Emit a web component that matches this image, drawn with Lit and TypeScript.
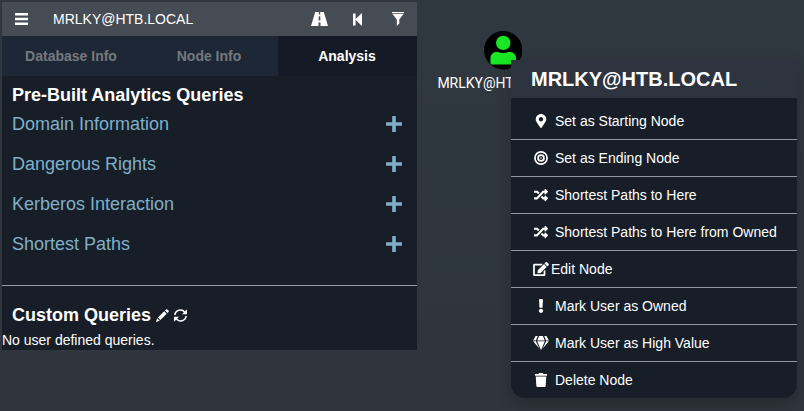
import { LitElement, html, css, svg } from "lit";
import { customElement } from "lit/decorators.js";

const icon = (name: string, viewBox: string, body: unknown) =>
  html`<svg class="icon ${name}" viewBox=${viewBox} fill="currentColor">${body}</svg>`;

const shuffle = () => icon("fa", "0 0 512 512", svg`<path d="M504.971 359.029c9.373 9.373 9.373 24.569 0 33.941l-80 79.984c-15.01 15.01-40.971 4.49-40.971-16.971V416h-58.785a12.004 12.004 0 0 1-8.773-3.812l-70.556-75.596 53.333-57.143L352 336h32v-39.981c0-21.438 25.943-31.998 40.971-16.971l80 79.981zM12 176h84l52.781 56.551 53.333-57.143-70.556-75.596A11.999 11.999 0 0 0 122.785 96H12c-6.627 0-12 5.373-12 12v56c0 6.627 5.373 12 12 12zm372 0v39.984c0 21.46 25.961 31.98 40.971 16.971l80-79.984c9.373-9.373 9.373-24.569 0-33.941l-80-79.981C409.943 24.021 384 34.582 384 56.019V96h-58.785a12.004 12.004 0 0 0-8.773 3.812L96 336H12c-6.627 0-12 5.373-12 12v56c0 6.627 5.373 12 12 12h110.785c3.326 0 6.503-1.381 8.773-3.812L352 176h32z"/>`);

const icons = {
  bars: () => icon("bars", "0 0 13 12", svg`<path d="M0 0h13v2.4H0zM0 4.800h13v2.400H0zM0 9.600h13v2.400H0z"/>`),
  road: () => icon("road", "0 0 17 14", svg`<path d="M4.2 0H7.800v2.6h1.400V0h3.600L17 14H9.500v-3.400H7.500V14H0zM7.800 4.2 7.600 8.600h1.800L9.200 4.200z" fill-rule="evenodd"/>`),
  back: () => icon("back", "0 0 9 13", svg`<path d="M0 .5h2.6v5.4L9 0v13L2.6 7.1v5.4H0z"/>`),
  filter: () => icon("filter", "0 0 12 14", svg`<path d="M0 0h12v1.2H0zM.5 2h11L7.3 7.5v4L4.8 14V7.5z"/>`),
  plus: () => icon("plus", "0 0 16 16", svg`<path d="M6.2.5q0-.5.5-.5h2.600q.5 0 .5.5v5.800h5.700q.5 0 .5.5v2.400q0 .5-.5.5H9.800v5.800q0 .5-.5.5H6.700q-.5 0-.5-.5v-5.800H.5Q0 9.700 0 9.200V6.800q0-.5.5-.5h5.700z"/>`),
  pencil: () => icon("pencil", "0 0 13 13", svg`<path d="m0 13 1.200-3.700 2.500 2.500zM1.900 8.600l6.300-6.300 2.500 2.500-6.300 6.300zM9 1.500l1-1q.7-.7 1.400 0l1.100 1.100q.7.7 0 1.400l-1 1z"/>`),
  refresh: () => icon("refresh", "0 0 13 13", svg`<g fill="none" stroke="currentColor" stroke-width="1.600"><path d="M.9 6A5.500 5.500 0 0 1 10.700 3.200M12.100 7A5.500 5.500 0 0 1 2.300 9.800"/></g><path d="M13 .2v5H8zM0 12.800v-5h5z"/>`),
};

const menu = [
  ["Set as Starting Node", () => icon("fa", "-64 0 512 512", svg`<path d="M172.268 501.670C26.970 291.031 0 269.413 0 192 0 85.961 85.961 0 192 0s192 85.961 192 192c0 77.413-26.970 99.031-172.268 309.670-9.535 13.774-29.930 13.773-39.464 0zM192 272c44.183 0 80-35.817 80-80s-35.817-80-80-80-80 35.817-80 80 35.817 80 80 80z"/>`)],
  ["Set as Ending Node", () => icon("fa", "0 0 512 512", svg`<g fill="none" stroke="currentColor" stroke-width="62"><circle cx="256" cy="256" r="222"/><circle cx="256" cy="256" r="108"/></g><circle cx="256" cy="256" r="30"/>`)],
  ["Shortest Paths to Here", shuffle],
  ["Shortest Paths to Here from Owned", shuffle],
  ["Edit Node", () => icon("fa edit", "0 0 576 512", svg`<path d="M402.600 83.200l90.200 90.200c3.800 3.800 3.800 10 0 13.800L274.400 405.600l-92.800 10.300c-12.400 1.400-22.900-9.100-21.500-21.500l10.300-92.800L388.800 83.200c3.800-3.800 10-3.800 13.800 0zm162-22.900l-48.800-48.800c-15.200-15.200-39.900-15.200-55.200 0l-35.400 35.400c-3.800 3.800-3.800 10 0 13.800l90.200 90.200c3.800 3.800 10 3.800 13.800 0l35.400-35.400c15.200-15.300 15.200-40 0-55.200zM384 346.200V448H64V128h229.800c3.200 0 6.200-1.300 8.500-3.500l40-40c7.600-7.600 2.200-20.500-8.500-20.500H48C21.500 64 0 85.500 0 112v352c0 26.500 21.500 48 48 48h352c26.500 0 48-21.500 48-48V306.200c0-10.700-12.900-16-20.500-8.500l-40 40c-2.200 2.300-3.500 5.300-3.500 8.500z"/>`)],
  ["Mark User as Owned", () => icon("fa", "-160 0 512 512", svg`<path d="M176 432c0 44.112-35.888 80-80 80s-80-35.888-80-80 35.888-80 80-80 80 35.888 80 80zM25.260 25.199l13.600 272C39.499 309.972 50.041 320 62.830 320h66.340c12.789 0 23.331-10.028 23.970-22.801l13.600-272C167.425 11.490 156.496 0 142.770 0H49.230C35.504 0 24.575 11.490 25.260 25.199z"/>`)],
  ["Mark User as High Value", () => icon("fa gem", "0 0 576 512", svg`<path d="M485.500 0L576 160H474.900L405.700 0h79.800zm-128 0l69.200 160H149.300L218.500 0h139zm-267 0h79.800l-69.200 160H0L90.500 0zM0 192h100.700l123 251.700c1.500 3.100-2.700 5.900-5 3.300L0 192zm148.200 0h279.600l-137 318.200c-1 2.400-4.500 2.400-5.500 0L148.200 192zm204.100 251.700l123-251.700H576L357.300 446.900c-2.300 2.700-6.500-.1-5-3.200z"/>`)],
  ["Delete Node", () => icon("fa", "-32 0 512 512", svg`<path d="M432 32H312l-9.400-18.700A24 24 0 0 0 281.100 0H166.800a23.720 23.720 0 0 0-21.400 13.300L136 32H16A16 16 0 0 0 0 48v32a16 16 0 0 0 16 16h416a16 16 0 0 0 16-16V48a16 16 0 0 0-16-16zM53.200 467a48 48 0 0 0 47.900 45h245.800a48 48 0 0 0 47.900-45L416 128H32z"/>`)],
] as const;

@customElement("search-panel")
class SearchPanel extends LitElement {
  static styles = css`
    :host { display: block; width: 415px; height: 348px; background: #171e28; color: #fff; }
    .icon { display: block; flex: none; }
    .bar { display: flex; align-items: center; height: 34px; background: #464c54; font-size: 14px; padding: 0 13px; box-sizing: border-box; }
    .bars { width: 13px; height: 12px; margin: 0 25px 0 0; }
    .name { flex: 1; }
    .road { width: 17px; height: 14px; margin: -1px 25px 0 0; }
    .back { width: 9px; height: 13px; margin: 0 30px 0 0; }
    .filter { width: 12px; height: 14px; margin-top: -1px; }
    .tabs { display: grid; grid-template-columns: 138px 138px 139px; height: 40px; line-height: 40px; text-align: center; font-size: 14px; font-weight: bold; }
    .tab { background: #1e2735; color: #747980; }
    .tab.active { background: #151b26; color: #fff; padding-right: 1px; }
    h3 { margin: 0; font-size: 18px; line-height: 20px; }
    .prebuilt { padding: 9px 15px 0 10px; }
    .row { display: flex; justify-content: space-between; align-items: center; height: 40px; font-size: 18px; color: #7fb0c8; }
    .rows { margin-top: -1px; }
    .plus { width: 16px; height: 16px; }
    .custom { display: flex; align-items: center; padding: 0 10px; margin-top: 19px; }
    .rule { height: 1px; background: #989ca3; margin-top: 21px; }
    .pencil { width: 13px; height: 13px; margin: 1px 5px 0 5px; }
    .refresh { width: 13px; height: 13px; margin-top: 1px; }
    .empty { font-size: 14px; line-height: 20px; margin-top: 5px; }
  `;
  render() {
    return html`
      <div class="bar">${icons.bars()}<span class="name">MRLKY@HTB.LOCAL</span>${icons.road()}${icons.back()}${icons.filter()}</div>
      <div class="tabs"><div class="tab">Database Info</div><div class="tab">Node Info</div><div class="tab active">Analysis</div></div>
      <div class="prebuilt">
        <h3>Pre-Built Analytics Queries</h3>
        <div class="rows">
          ${["Domain Information", "Dangerous Rights", "Kerberos Interaction", "Shortest Paths"].map(
            (t) => html`<div class="row"><span>${t}</span>${icons.plus()}</div>`)}
        </div>
      </div>
      <div class="rule"></div>
      <div class="custom"><h3>Custom Queries</h3>${icons.pencil()}${icons.refresh()}</div>
      <div class="empty">No user defined queries.</div>`;
  }
}

@customElement("node-menu")
class NodeMenu extends LitElement {
  static styles = css`
    :host { display: block; width: 286px; height: 338px; background: #171e28; color: #fff; border-radius: 0 0 14px 14px; overflow: hidden; box-shadow: 0 5px 15px rgba(0, 0, 0, 0.22); }
    .title { height: 38px; line-height: 38px; padding-left: 20px; background: #2d333f; font-size: 20px; font-weight: bold; margin-bottom: 5px; }
    .item { display: flex; align-items: center; height: 36px; padding-left: 23px; font-size: 14px; border-bottom: 1px solid #92969e; white-space: nowrap; }
    .item:last-child { border-bottom: 0; }
    .icon { width: 14px; height: 14px; margin-right: 7px; flex: none; }
    .edit { width: 16px; margin: 0 2px 0 -1px; }
    .gem { width: 16px; margin: 0 6px 0 -1px; }
  `;
  render() {
    return html`<div class="title">MRLKY@HTB.LOCAL</div>
      <div>${menu.map(([label, glyph]) => html`<div class="item">${glyph()}<span>${label}</span></div>`)}</div>`;
  }
}

@customElement("app-root")
class AppRoot extends LitElement {
  static styles = css`
    :host { display: block; position: relative; box-sizing: border-box; width: 804px; height: 411px; padding: 2px; overflow: hidden; background: linear-gradient(#30383f, #2e353c); font-family: "Liberation Sans", Arial, sans-serif; }
    .node { position: absolute; left: 433px; top: 31px; width: 140px; text-align: center; font: 14px/18px Roboto, sans-serif; color: #fff; }
    .node svg { display: block; width: 38.5px; height: 38.5px; margin: 0 0 4.5px 50.5px; }
    .label { display: block; transform: scaleY(1.08); }
    node-menu { position: absolute; left: 511px; top: 60px; }
  `;
  render() {
    return html`<search-panel></search-panel>
      <div class="node">
        <svg viewBox="0 0 39 39"><circle cx="19.500" cy="19.500" r="19.500"/><g fill="#19e624"><circle cx="19.500" cy="12" r="7.300"/><path d="M6.500 32.500v-4.500q0-6.500 7-7 6 2.500 12 0 7 .5 7 7v4.500q0 1.500-1.500 1.500H8q-1.500 0-1.500-1.500z"/></g></svg>
        <span class="label">MRLKY@HTB.LOCAL</span>
      </div>
      <node-menu></node-menu>`;
  }
}
